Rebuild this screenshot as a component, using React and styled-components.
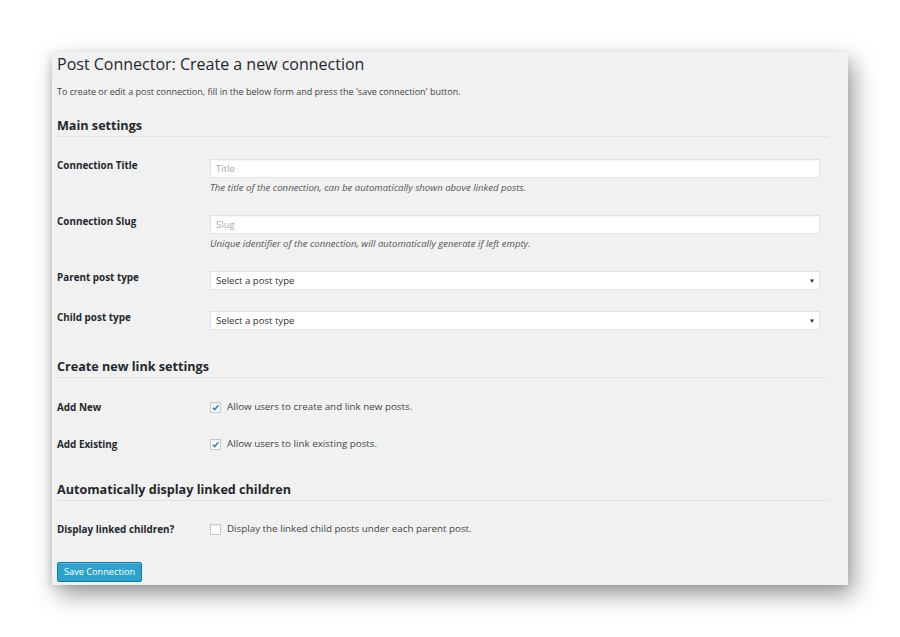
import React from "react";
import styled, { createGlobalStyle } from "styled-components";

const Global = createGlobalStyle`
  html, body { margin: 0; padding: 0; background: #ffffff; }
  body { font-family: "Open Sans", "Noto Sans", sans-serif; color: #222; }
  * { box-sizing: border-box; }
`;

const Page = styled.div`
  width: 900px;
  height: 637px;
  padding: 52px 0 0 52px;
`;

const Panel = styled.div`
  width: 796px;
  height: 533px;
  background: #f1f1f1;
  padding: 0 20px 0 5px;
  box-shadow: 6px 10px 22px rgba(0, 0, 0, 0.38), -2px 2px 8px rgba(0, 0, 0, 0.12);
  display: flex;
  flex-direction: column;
`;

const Title = styled.h1`
  margin: 0;
  font-size: 16px;
  line-height: 24px;
  font-weight: 400;
  color: #23282d;
`;

const Intro = styled.p`
  margin: 9px 0 0;
  font-size: 9px;
  line-height: 14px;
  color: #444;
`;

const Heading = styled.h2`
  margin: ${(p) => p.$top}px 0 0;
  font-size: 12.6px;
  line-height: 18px;
  font-weight: 700;
  color: #23282d;
  padding-bottom: 1px;
  border-bottom: 1px solid #e2e2e2;
`;

const Row = styled.div`
  display: grid;
  grid-template-columns: 153px 610px;
  margin-top: ${(p) => p.$top}px;
`;

const Label = styled.div`
  font-size: 9.9px;
  line-height: 14px;
  font-weight: 700;
  color: #23282d;
`;

const Field = styled.div`
  display: flex;
  flex-direction: column;
`;

const TextInput = styled.input`
  margin-top: 1px;
  height: 19px;
  width: 610px;
  border: 1px solid #e0e0e0;
  box-shadow: inset 0 1px 1px rgba(0, 0, 0, 0.04);
  background: #fff;
  padding: 0 5px;
  font-family: "Open Sans", sans-serif;
  font-size: 9.6px;
  outline: none;
  &::placeholder { color: #aaa; }
`;

const Hint = styled.div`
  margin-top: 3px;
  font-size: 9.6px;
  line-height: 14px;
  font-style: italic;
  color: #555;
`;

const Select = styled.div`
  margin-top: 1px;
  height: 19px;
  width: 610px;
  border: 1px solid #e0e0e0;
  background: #fff;
  display: flex;
  align-items: center;
  justify-content: space-between;
  padding: 0 4px 0 5px;
  font-size: 9.6px;
  color: #333;
`;

const Arrow = styled.span`
  font-size: 6px;
  color: #222;
`;

const CheckLine = styled.label`
  display: flex;
  align-items: center;
  gap: 6px;
  font-size: 9.8px;
  line-height: 14px;
  color: #444;
`;

const Box = styled.span`
  width: 11px;
  height: 11px;
  background: #fff;
  border: 1px solid #c8c8c8;
  box-shadow: inset 0 1px 1px rgba(0, 0, 0, 0.08);
  display: flex;
  align-items: center;
  justify-content: center;
`;

const Button = styled.button`
  margin-top: ${(p) => p.$top}px;
  align-self: flex-start;
  height: 20px;
  padding: 0 6px;
  background: #2ea2cc;
  border: 1px solid #0f7da8;
  border-radius: 2px;
  box-shadow: inset 0 1px 0 rgba(120, 200, 230, 0.5);
  color: #fff;
  font-family: "Open Sans", sans-serif;
  font-size: 9.2px;
  line-height: 18px;
`;

function Check({ checked, text }) {
  return (
    <CheckLine>
      <Box>
        {checked && (
          <svg width="9" height="9" viewBox="0 0 10 10">
            <path d="M2 5.2 L4.1 7.3 L8.2 2.4" fill="none" stroke="#1e8cbe" strokeWidth="1.7" />
          </svg>
        )}
      </Box>
      {text}
    </CheckLine>
  );
}

export default function App() {
  return (
    <Page>
      <Global />
      <Panel>
        <Title>Post Connector: Create a new connection</Title>
        <Intro>
          To create or edit a post connection, fill in the below form and press the 'save connection' button.
        </Intro>

        <Heading $top={18}>Main settings</Heading>

        <Row $top={21}>
          <Label>Connection Title</Label>
          <Field>
            <TextInput placeholder="Title" />
            <Hint>The title of the connection, can be automatically shown above linked posts.</Hint>
          </Field>
        </Row>
        <Row $top={19}>
          <Label>Connection Slug</Label>
          <Field>
            <TextInput placeholder="Slug" />
            <Hint>Unique identifier of the connection, will automatically generate if left empty.</Hint>
          </Field>
        </Row>
        <Row $top={19}>
          <Label>Parent post type</Label>
          <Field>
            <Select>
              Select a post type<Arrow>▼</Arrow>
            </Select>
          </Field>
        </Row>
        <Row $top={20}>
          <Label>Child post type</Label>
          <Field>
            <Select>
              Select a post type<Arrow>▼</Arrow>
            </Select>
          </Field>
        </Row>

        <Heading $top={28}>Create new link settings</Heading>

        <Row $top={22}>
          <Label>Add New</Label>
          <Check checked text="Allow users to create and link new posts." />
        </Row>
        <Row $top={23}>
          <Label>Add Existing</Label>
          <Check checked text="Allow users to link existing posts." />
        </Row>

        <Heading $top={30}>Automatically display linked children</Heading>

        <Row $top={21}>
          <Label>Display linked children?</Label>
          <Check text="Display the linked child posts under each parent post." />
        </Row>

        <Button $top={26}>Save Connection</Button>
      </Panel>
    </Page>
  );
}
